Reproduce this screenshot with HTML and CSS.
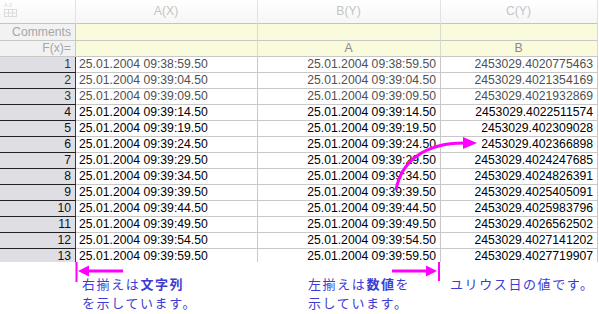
FILE: index.html
```html
<!DOCTYPE html>
<html>
<head>
    <title>Worksheet - text vs numeric dates</title>
    <link rel="stylesheet" href="styles.css">
</head>
<body>
    <div class="page">
        <div class="sheet">
            <div class="row head">
                <div class="cell corner">
                    <svg width="16" height="16" viewBox="0 0 16 16">
                        <text x="2" y="5" class="az">A-Z</text>
                        <rect x="2.5" y="7.5" width="12" height="7" fill="none" stroke="#dcdcdc"/>
                        <path d="M2.5 11h12M6.5 7.5v7M10.5 7.5v7" stroke="#dcdcdc"/>
                    </svg>
                </div>
                <div class="cell center">A(X)</div>
                <div class="cell center">B(Y)</div>
                <div class="cell center">C(Y)</div>
            </div>
            <div class="row meta comments">
                <div class="cell label">Comments</div>
                <div class="cell"></div>
                <div class="cell"></div>
                <div class="cell"></div>
            </div>
            <div class="row meta">
                <div class="cell label">F(x)=</div>
                <div class="cell"></div>
                <div class="cell center">A</div>
                <div class="cell center">B</div>
            </div>
            <div id="rows"></div>
        </div>

        <div class="notes">
            <div></div>
            <p class="note">右揃えは<b>文字列</b><br>を示しています。</p>
            <p class="note">左揃えは<b>数値</b>を<br>示しています。</p>
            <p class="note">ユリウス日の値です。</p>
        </div>

        <!-- magenta callout arrows drawn over the sheet -->
        <svg class="arrows" width="599" height="314" viewBox="0 0 599 314">
            <g stroke="#ff00ff" fill="none">
                <path d="M76.5 262v20" stroke-width="2"/>
                <path d="M86 271h37" stroke-width="3"/>
                <path d="M439 262v19" stroke-width="2"/>
                <path d="M392 271h36" stroke-width="3"/>
                <path d="M396 190C401 162 424 143 464 143" stroke-width="3"/>
            </g>
            <g fill="#ff00ff">
                <path d="M78 271l11-5.5v11z"/>
                <path d="M437 271l-11-5.5v11z"/>
                <path d="M477 143l-14-6v12z"/>
            </g>
        </svg>
    </div>

    <script>
        // worksheet data: text dates in A, numeric dates in B, julian day numbers in C
        var dates = [
            '09:38:59.50', '09:39:04.50', '09:39:09.50', '09:39:14.50', '09:39:19.50',
            '09:39:24.50', '09:39:29.50', '09:39:34.50', '09:39:39.50', '09:39:44.50',
            '09:39:49.50', '09:39:54.50', '09:39:59.50'
        ];
        var julian = [
            '2453029.4020775463', '2453029.4021354169', '2453029.4021932869', '2453029.4022511574',
            '2453029.402309028', '2453029.402366898', '2453029.4024247685', '2453029.4024826391',
            '2453029.4025405091', '2453029.4025983796', '2453029.4026562502', '2453029.4027141202',
            '2453029.4027719907'
        ];

        var html = '';
        for (var i = 0; i < dates.length; i++) {
            var cls = i < 3 ? 'row data dim' : 'row data';
            html += '<div class="' + cls + '">' +
                '<div class="cell num">' + (i + 1) + '</div>' +
                '<div class="cell">25.01.2004 ' + dates[i] + '</div>' +
                '<div class="cell right">25.01.2004 ' + dates[i] + '</div>' +
                '<div class="cell right">' + julian[i] + '</div>' +
                '</div>';
        }
        document.getElementById('rows').innerHTML = html;
    </script>
</body>
</html>
```

FILE: styles.css
```css
body {
    margin: 0;
    background-color: #fff;
    font-family: "Liberation Sans", Arial, sans-serif;
}
.page {
    position: relative;
    width: 599px;
    height: 314px;
    overflow: hidden;
}
.sheet {
    width: 598px;
    height: 262px;
    overflow: hidden;
}
.row {
    display: grid;
    grid-template-columns: 76px 182px 183px 157px;
    height: 16px;
}
.cell {
    box-sizing: border-box;
    border-right: 1px solid #c8c8c8;
    border-bottom: 1px solid #c8c8c8;
    padding: 0 4px 0 3px;
    font-size: 12.2px;
    line-height: 15px;
    color: #000;
    white-space: nowrap;
    overflow: hidden;
}
.center {
    text-align: center;
}
.right {
    text-align: right;
}
.az {
    font-size: 5px;
    fill: #d8d8d8;
    font-family: "Liberation Sans", sans-serif;
}

/* column header row */
.head {
    height: 24px;
}
.head .cell {
    background: linear-gradient(#ffffff, #f6f6f6);
    border-right-color: #e2e2e2;
    border-bottom-color: #c4c4c4;
    color: #c4c4c4;
    line-height: 23px;
}
.head .corner {
    padding: 2px 0 0 2px;
    line-height: 0;
}

/* comments / formula rows */
.meta .cell {
    background-color: #fafadc;
    color: #8a8a8a;
    border-right-color: #dcdccc;
    border-bottom-color: #c8c8c8;
}
.comments {
    height: 17px;
}
.comments .cell {
    line-height: 16px;
}
.meta .label {
    background-color: #f2f2f2;
    color: #a6a6a6;
    text-align: right;
    border-right-color: #c8c8c8;
}

/* data rows */
.data .num {
    background-color: #dedee4;
    text-align: right;
    color: #111;
    border-right-color: #3a3a3a;
    border-bottom-color: #222;
}
.dim .cell {
    color: #505050;
}
.dim .num {
    color: #333;
}

/* annotations */
.notes {
    display: grid;
    grid-template-columns: 82px 226px 142px auto;
    padding-top: 12px;
}
.note {
    margin: 0;
    font-family: "Noto Sans CJK JP", sans-serif;
    font-size: 13px;
    line-height: 19px;
    letter-spacing: 1.6px;
    color: #3c3cd4;
    white-space: nowrap;
}
.note b {
    font-weight: bold;
}
.arrows {
    position: absolute;
    left: 0;
    top: 0;
    pointer-events: none;
}
```
